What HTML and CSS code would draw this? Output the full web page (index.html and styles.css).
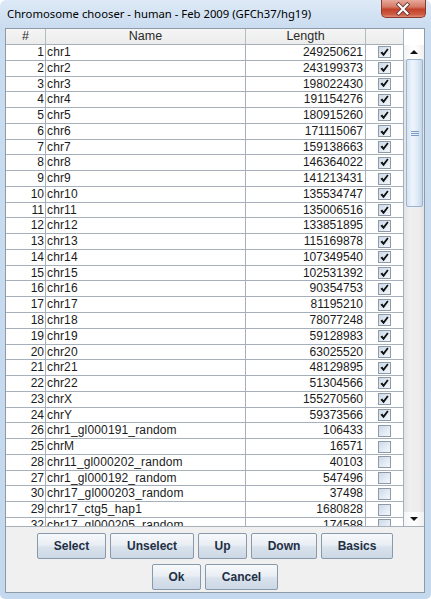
FILE: index.html
```html
<!DOCTYPE html>
<html>
<head>
<meta charset="utf-8">
<link rel="stylesheet" href="styles.css">
</head>
<body>
<svg class="defs" width="0" height="0">
  <symbol id="chk" viewBox="0 0 13 13">
    <polygon points="2.4,6.8 4.3,5.4 5.5,7.3 9.2,2.5 10.6,3.5 5.6,10.3" fill="#111111"/>
  </symbol>
</svg>
<div class="window">
  <div class="titlebar">
    <span class="title">Chromosome chooser - human - Feb 2009 (GFCh37/hg19)</span>
    <div class="close">
      <svg width="45" height="18" viewBox="0 0 45 18">
        <path d="M18 4.5 L27 13.5 M27 4.5 L18 13.5" stroke="#6b3a35" stroke-width="4" stroke-linecap="square" fill="none"/>
        <path d="M18 4.5 L27 13.5 M27 4.5 L18 13.5" stroke="#ffffff" stroke-width="2.2" stroke-linecap="square" fill="none"/>
      </svg>
    </div>
  </div>
  <div class="client">
    <div class="scrollpane">
      <div class="table">
        <div class="head">
          <div class="hc c-num">#</div>
          <div class="hc c-name">Name</div>
          <div class="hc c-len">Length</div>
          <div class="hc c-sel"></div>
        </div>
        <div class="body">
          <div class="row"><div class="c c-num">1</div><div class="c c-name">chr1</div><div class="c c-len">249250621</div><div class="c c-sel"><span class="cb"><svg width="13" height="13"><use href="#chk"/></svg></span></div></div>
          <div class="row"><div class="c c-num">2</div><div class="c c-name">chr2</div><div class="c c-len">243199373</div><div class="c c-sel"><span class="cb"><svg width="13" height="13"><use href="#chk"/></svg></span></div></div>
          <div class="row"><div class="c c-num">3</div><div class="c c-name">chr3</div><div class="c c-len">198022430</div><div class="c c-sel"><span class="cb"><svg width="13" height="13"><use href="#chk"/></svg></span></div></div>
          <div class="row"><div class="c c-num">4</div><div class="c c-name">chr4</div><div class="c c-len">191154276</div><div class="c c-sel"><span class="cb"><svg width="13" height="13"><use href="#chk"/></svg></span></div></div>
          <div class="row"><div class="c c-num">5</div><div class="c c-name">chr5</div><div class="c c-len">180915260</div><div class="c c-sel"><span class="cb"><svg width="13" height="13"><use href="#chk"/></svg></span></div></div>
          <div class="row"><div class="c c-num">6</div><div class="c c-name">chr6</div><div class="c c-len">171115067</div><div class="c c-sel"><span class="cb"><svg width="13" height="13"><use href="#chk"/></svg></span></div></div>
          <div class="row"><div class="c c-num">7</div><div class="c c-name">chr7</div><div class="c c-len">159138663</div><div class="c c-sel"><span class="cb"><svg width="13" height="13"><use href="#chk"/></svg></span></div></div>
          <div class="row"><div class="c c-num">8</div><div class="c c-name">chr8</div><div class="c c-len">146364022</div><div class="c c-sel"><span class="cb"><svg width="13" height="13"><use href="#chk"/></svg></span></div></div>
          <div class="row"><div class="c c-num">9</div><div class="c c-name">chr9</div><div class="c c-len">141213431</div><div class="c c-sel"><span class="cb"><svg width="13" height="13"><use href="#chk"/></svg></span></div></div>
          <div class="row"><div class="c c-num">10</div><div class="c c-name">chr10</div><div class="c c-len">135534747</div><div class="c c-sel"><span class="cb"><svg width="13" height="13"><use href="#chk"/></svg></span></div></div>
          <div class="row"><div class="c c-num">11</div><div class="c c-name">chr11</div><div class="c c-len">135006516</div><div class="c c-sel"><span class="cb"><svg width="13" height="13"><use href="#chk"/></svg></span></div></div>
          <div class="row"><div class="c c-num">12</div><div class="c c-name">chr12</div><div class="c c-len">133851895</div><div class="c c-sel"><span class="cb"><svg width="13" height="13"><use href="#chk"/></svg></span></div></div>
          <div class="row"><div class="c c-num">13</div><div class="c c-name">chr13</div><div class="c c-len">115169878</div><div class="c c-sel"><span class="cb"><svg width="13" height="13"><use href="#chk"/></svg></span></div></div>
          <div class="row"><div class="c c-num">14</div><div class="c c-name">chr14</div><div class="c c-len">107349540</div><div class="c c-sel"><span class="cb"><svg width="13" height="13"><use href="#chk"/></svg></span></div></div>
          <div class="row"><div class="c c-num">15</div><div class="c c-name">chr15</div><div class="c c-len">102531392</div><div class="c c-sel"><span class="cb"><svg width="13" height="13"><use href="#chk"/></svg></span></div></div>
          <div class="row"><div class="c c-num">16</div><div class="c c-name">chr16</div><div class="c c-len">90354753</div><div class="c c-sel"><span class="cb"><svg width="13" height="13"><use href="#chk"/></svg></span></div></div>
          <div class="row"><div class="c c-num">17</div><div class="c c-name">chr17</div><div class="c c-len">81195210</div><div class="c c-sel"><span class="cb"><svg width="13" height="13"><use href="#chk"/></svg></span></div></div>
          <div class="row"><div class="c c-num">18</div><div class="c c-name">chr18</div><div class="c c-len">78077248</div><div class="c c-sel"><span class="cb"><svg width="13" height="13"><use href="#chk"/></svg></span></div></div>
          <div class="row"><div class="c c-num">19</div><div class="c c-name">chr19</div><div class="c c-len">59128983</div><div class="c c-sel"><span class="cb"><svg width="13" height="13"><use href="#chk"/></svg></span></div></div>
          <div class="row"><div class="c c-num">20</div><div class="c c-name">chr20</div><div class="c c-len">63025520</div><div class="c c-sel"><span class="cb"><svg width="13" height="13"><use href="#chk"/></svg></span></div></div>
          <div class="row"><div class="c c-num">21</div><div class="c c-name">chr21</div><div class="c c-len">48129895</div><div class="c c-sel"><span class="cb"><svg width="13" height="13"><use href="#chk"/></svg></span></div></div>
          <div class="row"><div class="c c-num">22</div><div class="c c-name">chr22</div><div class="c c-len">51304566</div><div class="c c-sel"><span class="cb"><svg width="13" height="13"><use href="#chk"/></svg></span></div></div>
          <div class="row"><div class="c c-num">23</div><div class="c c-name">chrX</div><div class="c c-len">155270560</div><div class="c c-sel"><span class="cb"><svg width="13" height="13"><use href="#chk"/></svg></span></div></div>
          <div class="row"><div class="c c-num">24</div><div class="c c-name">chrY</div><div class="c c-len">59373566</div><div class="c c-sel"><span class="cb"><svg width="13" height="13"><use href="#chk"/></svg></span></div></div>
          <div class="row"><div class="c c-num">26</div><div class="c c-name">chr1_gl000191_random</div><div class="c c-len">106433</div><div class="c c-sel"><span class="cb"></span></div></div>
          <div class="row"><div class="c c-num">25</div><div class="c c-name">chrM</div><div class="c c-len">16571</div><div class="c c-sel"><span class="cb"></span></div></div>
          <div class="row"><div class="c c-num">28</div><div class="c c-name">chr11_gl000202_random</div><div class="c c-len">40103</div><div class="c c-sel"><span class="cb"></span></div></div>
          <div class="row"><div class="c c-num">27</div><div class="c c-name">chr1_gl000192_random</div><div class="c c-len">547496</div><div class="c c-sel"><span class="cb"></span></div></div>
          <div class="row"><div class="c c-num">30</div><div class="c c-name">chr17_gl000203_random</div><div class="c c-len">37498</div><div class="c c-sel"><span class="cb"></span></div></div>
          <div class="row"><div class="c c-num">29</div><div class="c c-name">chr17_ctg5_hap1</div><div class="c c-len">1680828</div><div class="c c-sel"><span class="cb"></span></div></div>
          <div class="row"><div class="c c-num">32</div><div class="c c-name">chr17_gl000205_random</div><div class="c c-len">174588</div><div class="c c-sel"><span class="cb"></span></div></div>
        </div>
      </div>
      <div class="vscroll">
        <div class="corner"></div>
        <div class="arrow up"><span class="tri-up"></span></div>
        <div class="track">
          <div class="thumb"><span class="grip"></span><span class="grip"></span><span class="grip"></span></div>
        </div>
        <div class="arrow down"><span class="tri-down"></span></div>
      </div>
    </div>
    <div class="buttons">
      <div class="btnrow">
        <button class="btn w-select">Select</button>
        <button class="btn w-unselect">Unselect</button>
        <button class="btn w-up">Up</button>
        <button class="btn w-down">Down</button>
        <button class="btn w-basics">Basics</button>
      </div>
      <div class="btnrow">
        <button class="btn w-ok">Ok</button>
        <button class="btn w-cancel">Cancel</button>
      </div>
    </div>
  </div>
</div>
</body>
</html>
```
FILE: styles.css
```css
html, body {
  margin: 0;
  padding: 0;
  background: #ffffff;
}
.defs {
  position: absolute;
  width: 0;
  height: 0;
}
.window {
  width: 431px;
  height: 599px;
  box-sizing: border-box;
  display: flex;
  flex-direction: column;
  background: linear-gradient(#dde9f6, #cadcf0 28px, #c4d8ee);
  border-radius: 6px 6px 5px 5px;
  font-family: "Liberation Sans", Arial, sans-serif;
}
.titlebar {
  height: 28px;
  flex: none;
  display: flex;
  align-items: flex-start;
}
.title {
  margin: 6px 0 0 7px;
  font-family: "Noto Sans", "Open Sans", sans-serif;
  font-size: 11.3px;
  line-height: 15px;
  color: #000;
}
.close {
  margin-left: auto;
  margin-right: 5px;
  width: 45px;
  height: 18px;
  border-radius: 0 0 5px 5px;
  border: 1px solid #8a3b30;
  border-top: none;
  box-sizing: border-box;
  background: linear-gradient(#e9a99b, #d57a66 40%, #c2412a 55%, #cf5d45 85%, #e08a73);
  display: flex;
}
.close svg {
  margin-left: -1px;
}
.client {
  flex: 1;
  margin: 0 6px 6px 5px;
  border: 1px solid #8d9aa8;
  background: #f0f0f0;
  display: flex;
  flex-direction: column;
}
.scrollpane {
  height: 498px;
  box-sizing: border-box;
  border-bottom: 1px solid #a6b0ba;
  display: flex;
  background: #ffffff;
}
.table {
  width: 398px;
  display: flex;
  flex-direction: column;
}
.head {
  height: 16px;
  box-sizing: border-box;
  border-bottom: 1px solid #a6b0ba;
  display: flex;
  background: linear-gradient(#f5f5f5, #ececec);
}
.hc {
  box-sizing: border-box;
  border-right: 1px solid #b4bcc4;
  font-size: 12.5px;
  line-height: 15px;
  color: #2a2a2a;
  text-align: center;
}
.body {
  flex: 1;
  overflow: hidden;
}
.row {
  height: 15.78px;
  box-sizing: border-box;
  border-bottom: 1px solid #a6b0ba;
  display: flex;
}
.c {
  box-sizing: border-box;
  border-right: 1px solid #a6b0ba;
  font-size: 12px;
  line-height: 14.78px;
  color: #1a1a1a;
  white-space: nowrap;
  overflow: hidden;
}
.c-num { width: 40px; }
.c-name { width: 200px; }
.c-len { width: 120px; }
.c-sel { width: 38px; }
.c.c-num { text-align: right; padding-right: 1px; }
.c.c-name { padding-left: 1px; letter-spacing: 0.15px; }
.c.c-len { text-align: right; padding-right: 2px; }
.c.c-sel {
  display: flex;
  align-items: center;
  justify-content: center;
  padding-right: 1px;
}
.cb {
  width: 13px;
  height: 12px;
  box-sizing: border-box;
  border: 1px solid #8e9aa7;
  background: linear-gradient(135deg, #cdd9e7, #e4ecf5 60%, #f3f6fa);
  display: flex;
  align-items: center;
  justify-content: center;
}
.cb svg {
  flex: none;
  margin: -1px;
}
.vscroll {
  width: 20px;
  display: flex;
  flex-direction: column;
  background: #ffffff;
  border-left: 1px solid #a6b0ba;
  margin-left: -1px;
}
.corner {
  height: 16px;
  flex: none;
  background: #ffffff;
}
.arrow {
  height: 14px;
  flex: none;
  display: flex;
  align-items: center;
  justify-content: center;
  background: linear-gradient(90deg, #f4f4f4, #ffffff 50%, #f0f0f0);
}
.tri-up {
  width: 0;
  height: 0;
  border-left: 4px solid transparent;
  border-right: 4px solid transparent;
  border-bottom: 4px solid #111;
}
.tri-down {
  width: 0;
  height: 0;
  border-left: 4px solid transparent;
  border-right: 4px solid transparent;
  border-top: 4px solid #111;
}
.track {
  flex: 1;
  background: linear-gradient(90deg, #e2e2e2, #f0f0f0 30%, #ececec 80%, #e2e2e2);
  padding: 0 1px 0 2px;
}
.thumb {
  height: 148px;
  box-sizing: border-box;
  border: 1px solid #9bb3d2;
  border-radius: 2px;
  background: linear-gradient(90deg, #d5e3f3, #eef4fb 35%, #e2ecf7 65%, #c4d7ed);
  display: flex;
  flex-direction: column;
  align-items: center;
  justify-content: center;
  gap: 1px;
}
.grip {
  width: 8px;
  height: 1px;
  background: #7f9ac0;
}
.buttons {
  flex: 1;
  padding-top: 6px;
  display: flex;
  flex-direction: column;
  align-items: center;
  gap: 5px;
}
.btnrow {
  display: flex;
  gap: 4px;
}
.btn {
  height: 26px;
  box-sizing: border-box;
  margin: 0;
  padding: 0;
  border: 1px solid #8799ad;
  border-radius: 2px;
  background: linear-gradient(#f7f9fb, #e9eef4 45%, #d9e2ec 55%, #ccd8e5);
  font-family: "Liberation Sans", Arial, sans-serif;
  font-weight: bold;
  font-size: 12px;
  color: #1f2f44;
}
.w-select { width: 69px; }
.w-unselect { width: 84px; }
.w-up { width: 49px; }
.w-down { width: 66px; }
.w-basics { width: 72px; }
.w-ok { width: 49px; }
.w-cancel { width: 73px; }
```
